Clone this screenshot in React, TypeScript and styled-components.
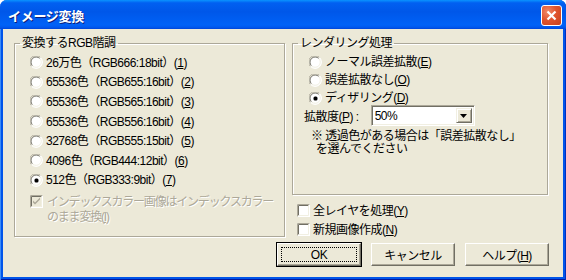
import React from 'react';
import styled, { createGlobalStyle } from 'styled-components';

const Global = createGlobalStyle`
  html, body { margin: 0; padding: 0; background: #fff; }
  body { font-family: "Liberation Sans", "Noto Sans CJK JP", sans-serif; }
`;

const FONT = `"Liberation Sans", "Noto Sans CJK JP", sans-serif`;

const Window = styled.div`
  width: 566px;
  height: 280px;
  box-sizing: border-box;
  display: flex;
  flex-direction: column;
  background: #0055ea;
  border-radius: 7px 7px 0 0;
  overflow: hidden;
  padding: 0 3px 3px 3px;
  box-shadow: inset 1px 0 #3c8cf7, inset -1px 0 #0030c0, inset 0 -1px #0018a0;
`;

const TitleBar = styled.div`
  height: 29px;
  flex: none;
  margin: 0 -3px;
  padding: 0 4px 0 8px;
  display: flex;
  align-items: center;
  justify-content: space-between;
  background: linear-gradient(
    to bottom,
    #0a93ff 0%,
    #0160f1 10%,
    #0057e9 40%,
    #0062f7 86%,
    #0058ee 94%,
    #0045d8 100%
  );
`;

const Title = styled.span`
  font-family: "Noto Sans CJK JP", sans-serif;
  font-size: 13px;
  font-weight: bold;
  color: #fff;
  text-shadow: 1px 1px #0a1e7a;
  letter-spacing: -0.3px;
  margin-top: 1px;
`;

const CloseButton = styled.div`
  width: 21px;
  height: 21px;
  box-sizing: border-box;
  border: 1px solid #fff;
  border-radius: 3px;
  background: radial-gradient(circle at 30% 30%, #f08a6a 0%, #e0552f 45%, #c8401c 100%);
  display: flex;
  align-items: center;
  justify-content: center;
  margin-top: 1px;
`;

const Body = styled.div`
  flex: 1;
  background: #ece9d8;
  display: flex;
  flex-direction: column;
  padding: 7px 14px 0 11px;
  font-family: ${FONT};
  font-size: 12px;
  letter-spacing: -0.5px;
  color: #000;
`;

const Columns = styled.div`
  display: flex;
  align-items: flex-start;
  gap: 7px;
`;

const RightColumn = styled.div`
  display: flex;
  flex-direction: column;
  width: 256px;
`;

const Group = styled.fieldset<{ $w: number; $h: number }>`
  margin: 0;
  width: ${(p) => p.$w}px;
  height: ${(p) => p.$h}px;
  box-sizing: border-box;
  border: 1px solid #aca899;
  box-shadow: inset 1px 1px #fff, 1px 1px #fff;
  padding: 0;
  display: flex;
  flex-direction: column;
`;

const Legend = styled.legend`
  padding: 0 2px;
  margin-left: 5px;
  font-size: 12px;
  line-height: 14px;
`;

const OptionList = styled.div<{ $row: number; $left: number; $top: number }>`
  display: flex;
  flex-direction: column;
  padding: ${(p) => p.$top}px 0 0 ${(p) => p.$left}px;
  & > * {
    height: ${(p) => p.$row}px;
  }
`;

const Option = styled.div`
  display: flex;
  align-items: center;
  gap: 3px;
  white-space: nowrap;
  line-height: 14px;
`;

const WrapOption = styled.div`
  display: flex;
  align-items: flex-start;
  gap: 4px;
  margin-top: 5px;
  padding-left: 15px;
  color: #aca899;
  line-height: 15px;
  white-space: nowrap;
  letter-spacing: -1.2px;
  text-shadow: 1px 1px #fff;
`;

const U = styled.span`
  text-decoration: underline;
  text-underline-offset: 1px;
`;

const Field = styled.div`
  display: flex;
  align-items: center;
  gap: 12px;
  padding-left: 11px;
  margin-top: -2px;
`;

const Combo = styled.div`
  width: 104px;
  height: 21px;
  box-sizing: border-box;
  background: #fff;
  border-top: 1px solid #aca899;
  border-left: 1px solid #aca899;
  border-right: 1px solid #fff;
  border-bottom: 1px solid #fff;
  box-shadow: inset 1px 1px #716f64, inset -1px -1px #f1efe2;
  display: flex;
  align-items: center;
  justify-content: space-between;
  padding: 2px;
`;

const ComboText = styled.span`
  padding-left: 1px;
`;

const ComboButton = styled.div`
  width: 16px;
  height: 15px;
  box-sizing: border-box;
  background: #ece9d8;
  border-top: 1px solid #f1efe2;
  border-left: 1px solid #f1efe2;
  border-right: 1px solid #716f64;
  border-bottom: 1px solid #716f64;
  box-shadow: inset 1px 1px #fff, inset -1px -1px #aca899;
  display: flex;
  align-items: center;
  justify-content: center;
`;

const Note = styled.div`
  padding-left: 18px;
  margin-top: 4px;
  line-height: 13px;
`;

const NoteLine = styled.div<{ $indent?: number }>`
  padding-left: ${(p) => p.$indent ?? 0}px;
  white-space: nowrap;
`;

const CheckList = styled.div`
  display: flex;
  flex-direction: column;
  padding: 6px 0 0 5px;
  & > * {
    height: 19px;
  }
`;

const ButtonRow = styled.div`
  display: flex;
  justify-content: flex-end;
  gap: 10px;
  margin-top: 4px;
`;

const Button = styled.div<{ $default?: boolean }>`
  width: 84px;
  height: 23px;
  box-sizing: border-box;
  background: #ece9d8;
  display: flex;
  align-items: center;
  justify-content: center;
  position: relative;
  border-top: 1px solid #fff;
  border-left: 1px solid #fff;
  border-right: 1px solid #716f64;
  border-bottom: 1px solid #716f64;
  box-shadow: inset -1px -1px #aca899;
  ${(p) =>
    p.$default &&
    `
    outline: 1px solid #000;
    &::after {
      content: '';
      position: absolute;
      inset: 3px;
      border: 1px dotted #000;
    }
  `}
`;

function Radio({ checked }: { checked?: boolean }) {
  return (
    <svg width="13" height="13" viewBox="0 0 13 13" style={{ flex: 'none' }}>
      <circle cx="6.5" cy="6.5" r="6" fill="#fff" />
      <path d="M1.5 10.5 A6 6 0 0 1 10.5 1.5" stroke="#aca899" strokeWidth="1" fill="none" />
      <path d="M10.5 1.5 A6 6 0 0 1 1.5 10.5" stroke="#fff" strokeWidth="1" fill="none" />
      <path d="M2.5 9.8 A5 5 0 0 1 9.8 2.5" stroke="#716f64" strokeWidth="1" fill="none" />
      <path d="M9.8 2.5 A5 5 0 0 1 2.5 9.8" stroke="#f1efe2" strokeWidth="1" fill="none" />
      {checked && <rect x="4.5" y="4.5" width="4" height="4" rx="1.5" fill="#000" />}
    </svg>
  );
}

function Check({ checked, disabled }: { checked?: boolean; disabled?: boolean }) {
  return (
    <svg width="13" height="13" viewBox="0 0 13 13" style={{ flex: 'none' }}>
      <rect x="0" y="0" width="13" height="13" fill="#fff" />
      <rect x="1" y="1" width="11" height="11" fill={disabled ? '#ece9d8' : '#fff'} />
      <path d="M0.5 12.5 V0.5 H12.5" stroke="#aca899" fill="none" />
      <path d="M1.5 11.5 V1.5 H11.5" stroke="#716f64" fill="none" />
      <path d="M1.5 11.5 H11.5 V1.5" stroke="#f1efe2" fill="none" />
      {checked && (
        <path
          d="M3 5.5 L5 7.5 L10 2.5 V4.5 L5 9.5 L3 7.5 Z"
          fill={disabled ? '#aca899' : '#000'}
        />
      )}
    </svg>
  );
}

const leftOptions = [
  ['26万色（RGB666:18bit）', '1'],
  ['65536色（RGB655:16bit）', '2'],
  ['65536色（RGB565:16bit）', '3'],
  ['65536色（RGB556:16bit）', '4'],
  ['32768色（RGB555:15bit）', '5'],
  ['4096色（RGB444:12bit）', '6'],
  ['512色（RGB333:9bit）', '7'],
];

const rightOptions = [
  ['ノーマル誤差拡散', 'E'],
  ['誤差拡散なし', 'O'],
  ['ディザリング', 'D'],
];

export default function App() {
  return (
    <>
      <Global />
      <Window>
        <TitleBar>
          <Title>イメージ変換</Title>
          <CloseButton>
            <svg width="11" height="11" viewBox="0 0 11 11">
              <path d="M1.5 1.5 L9.5 9.5 M9.5 1.5 L1.5 9.5" stroke="#fff" strokeWidth="2.2" />
            </svg>
          </CloseButton>
        </TitleBar>
        <Body>
          <Columns>
            <Group $w={271} $h={201}>
              <Legend>変換するRGB階調</Legend>
              <OptionList $row={19.6} $left={15} $top={3}>
                {leftOptions.map(([label, key], i) => (
                  <Option key={key}>
                    <Radio checked={i === 6} />
                    <span>
                      {label}(<U>{key}</U>)
                    </span>
                  </Option>
                ))}
              </OptionList>
              <WrapOption>
                <Check checked disabled />
                <span>
                  インデックスカラー画像はインデックスカラー
                  <br />
                  のまま変換(<U>I</U>)
                </span>
              </WrapOption>
            </Group>
            <RightColumn>
              <Group $w={256} $h={159}>
                <Legend>レンダリング処理</Legend>
                <OptionList $row={18} $left={16} $top={3}>
                  {rightOptions.map(([label, key], i) => (
                    <Option key={key}>
                      <Radio checked={i === 2} />
                      <span>
                        {label}(<U>{key}</U>)
                      </span>
                    </Option>
                  ))}
                </OptionList>
                <Field>
                  <span>
                    拡散度(<U>P</U>) :
                  </span>
                  <Combo>
                    <ComboText>50%</ComboText>
                    <ComboButton>
                      <svg width="7" height="4" viewBox="0 0 7 4">
                        <path d="M0 0 H7 L3.5 4 Z" fill="#000" />
                      </svg>
                    </ComboButton>
                  </Combo>
                </Field>
                <Note>
                  <NoteLine>※ 透過色がある場合は「誤差拡散なし」</NoteLine>
                  <NoteLine $indent={5}>を選んでください</NoteLine>
                </Note>
              </Group>
              <CheckList>
                <Option>
                  <Check />
                  <span>
                    全レイヤを処理(<U>Y</U>)
                  </span>
                </Option>
                <Option>
                  <Check />
                  <span>
                    新規画像作成(<U>N</U>)
                  </span>
                </Option>
              </CheckList>
            </RightColumn>
          </Columns>
          <ButtonRow>
            <Button $default>OK</Button>
            <Button>キャンセル</Button>
            <Button>
              <span>
                ヘルプ(<U>H</U>)
              </span>
            </Button>
          </ButtonRow>
        </Body>
      </Window>
    </>
  );
}
